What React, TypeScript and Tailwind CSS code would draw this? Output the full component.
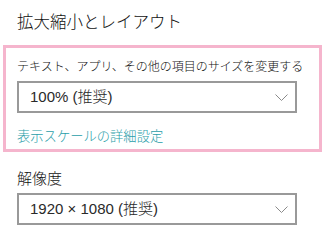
import React from 'react';

const font = { fontFamily: '"Noto Sans CJK JP", "Noto Sans", sans-serif' };

const Chevron = () => (
  <svg width="13" height="7" viewBox="0 0 13 7" fill="none" className="shrink-0">
    <path d="M0.5 0.5 L6.5 6.5 L12.5 0.5" stroke="#8a8a8a" strokeWidth="1" />
  </svg>
);

const Select = ({ value }: { value: string }) => (
  <div className="w-[280px] h-[32px] border-2 border-[#999999] flex items-center justify-between pl-[11px] pr-[7px] bg-white">
    <span className="font-['Liberation_Sans','Noto_Sans_CJK_JP',sans-serif] font-light text-[15px] leading-[20px] text-[#2a2a2a]">
      {value}
    </span>
    <Chevron />
  </div>
);

export default function App() {
  return (
    <div className="w-[334px] h-[237px] bg-white overflow-hidden" style={font}>
      <div className="pl-[17px] pt-[9px] h-[36px]">
        <h1 className="text-[16.5px] leading-[24px] text-[#111] font-light">拡大縮小とレイアウト</h1>
      </div>
      <div className="ml-[3px] mt-[9px] w-[319px] h-[107px] border-[3px] border-[#f5b5cd] pl-[11px] pt-[10px]">
        <div className="text-[12px] leading-[16px] text-[#111] font-light whitespace-nowrap">
          テキスト、アプリ、その他の項目のサイズを変更する
        </div>
        <div className="mt-[7px]">
          <Select value="100% (推奨)" />
        </div>
        <div className="mt-[14px] text-[13.3px] leading-[18px] text-[#2a9ea9] font-light">表示スケールの詳細設定</div>
      </div>
      <div className="pl-[17px] mt-[16px]">
        <div className="text-[15px] leading-[20px] text-[#111] font-light">解像度</div>
        <div className="mt-[5px]">
          <Select value="1920 × 1080 (推奨)" />
        </div>
      </div>
    </div>
  );
}
